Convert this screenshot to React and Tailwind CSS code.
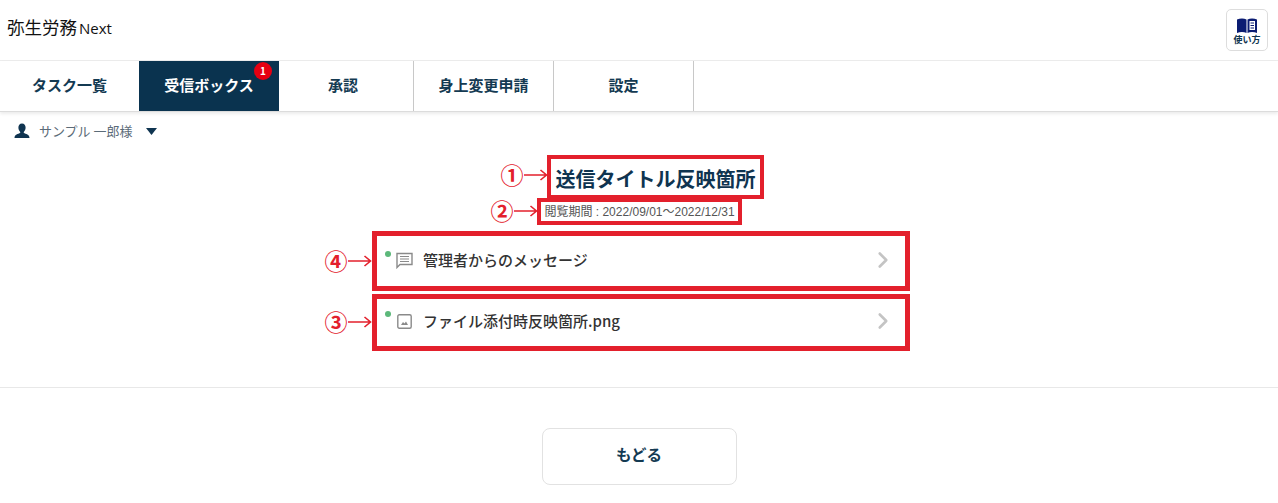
import { ChevronRight } from 'lucide-react';

const font = { jp: '"Noto Sans CJK JP", "Liberation Sans", sans-serif' };

const tabs = [
  { label: 'タスク一覧', width: 'w-[139px]' },
  { label: '受信ボックス', width: 'w-[140px]', active: true, badge: 1 },
  { label: '承認', width: 'w-[135px] pr-[6px]', divider: true },
  { label: '身上変更申請', width: 'w-[140px]', divider: true },
  { label: '設定', width: 'w-[140px]', divider: true },
];

function BookIcon() {
  return (
    <svg width="22" height="15" viewBox="0 0 22 15">
      <path d="M1 1.5 C4 0 8 0 10.5 1.5 V15 C8 13.5 4 13.5 1 15 Z" fill="#0b1c72" />
      <path d="M11.5 1.5 C14 0 18 0 21 1.5 V15 C18 13.5 14 13.5 11.5 15 Z" fill="#0b1c72" />
      <path d="M13.5 3 H19 V12 H13.5 Z" fill="#fff" />
      <path d="M14.5 5 H18 M14.5 7.5 H18 M14.5 10 H18" stroke="#0b1c72" strokeWidth="1" />
    </svg>
  );
}

function UserIcon() {
  return (
    <svg width="16" height="16" viewBox="0 0 16 16" fill="#0f3450">
      <path d="M8 0.5 C10.4 0.5 11.6 2.3 11.6 4.6 C11.6 6.6 10.8 8 9.8 9 V10 C11.8 10.8 15.5 11.5 15.5 15 H0.5 C0.5 11.5 4.2 10.8 6.2 10 V9 C5.2 8 4.4 6.6 4.4 4.6 C4.4 2.3 5.6 0.5 8 0.5 Z" />
    </svg>
  );
}

function MessageIcon() {
  return (
    <svg width="17" height="17" viewBox="0 0 17 17" fill="none" stroke="#8a8a8a">
      <path d="M1 1.5 H16 V12.5 H4 L1 15.5 Z" strokeWidth="1.4" />
      <path d="M4 4.5 H13 M4 7 H13 M4 9.5 H13" strokeWidth="1.2" />
    </svg>
  );
}

function ImageIcon() {
  return (
    <svg width="15" height="15" viewBox="0 0 15 15" fill="none">
      <rect x="0.8" y="0.8" width="13.4" height="13.4" rx="1.5" stroke="#8a8a8a" strokeWidth="1.4" />
      <path d="M4 11 L6 8 L7.5 9.5 L9 7.5 L11 11 Z" fill="#8a8a8a" />
    </svg>
  );
}

// 赤い注釈: 丸数字と矢印
function Callout({ mark, className }) {
  return (
    <div className={`absolute flex items-center text-[#e3202c] ${className}`}>
      <span className="w-[24px] text-center text-[23px] leading-none font-bold">{mark}</span>
      <svg width="24" height="12" viewBox="0 0 24 12" fill="none" stroke="#e3202c" strokeWidth="1.6">
        <path d="M0 6 H22 M16.5 1 L22.5 6 L16.5 11" />
      </svg>
    </div>
  );
}

function FileRow({ icon, label, mark, markTop, dotTop, className }) {
  return (
    <div className={`relative ml-[372px] flex w-[538px] items-center border-[5px] border-[#e3202c] bg-white ${className}`}>
      <Callout mark={mark} className={`left-[-53px] ${markTop}`} />
      <span className={`absolute left-[8px] h-[6px] w-[6px] rounded-full bg-[#5cb87a] ${dotTop}`} />
      <span className="ml-[18px] flex w-[19px] justify-center">{icon}</span>
      <span className="ml-[9px] flex-1 text-[15px] font-medium text-[#333]">{label}</span>
      <ChevronRight size={26} strokeWidth={2.4} className="mr-[9px] text-[#c4c4c4]" />
    </div>
  );
}

export default function App() {
  return (
    <div className="h-[503px] w-[1278px] overflow-hidden bg-white" style={{ fontFamily: font.jp }}>
      <header className="flex h-[61px] items-center justify-between border-b border-[#ececec] pl-[7px] pr-[10px]">
        <div className="flex items-baseline pb-[5px] text-[#111]">
          <span className="text-[17.5px]">弥生労務</span>
          <span className="ml-[2px] text-[15px]" style={{ fontFamily: '"Open Sans", sans-serif' }}>Next</span>
        </div>
        <button className="flex h-[42px] w-[42px] flex-col items-center justify-center rounded-[5px] border border-[#ddd] pt-[1px]">
          <BookIcon />
          <span className="mt-[2px] text-[9px] leading-none font-bold text-[#0f3450]">使い方</span>
        </button>
      </header>

      <nav className="flex h-[51px] border-b border-[#dcdcdc] shadow-[0_2px_3px_rgba(0,0,0,0.08)]">
        {tabs.map((tab) => (
          <div
            key={tab.label}
            className={`relative flex h-[50px] items-center justify-center pb-[2px] text-[15px] font-bold ${tab.width} ${
              tab.active ? 'bg-[#0a334f] text-white' : 'text-[#143a52]'
            } ${tab.divider ? 'border-r border-[#c8c8c8]' : ''}`}
          >
            {tab.label}
            {tab.badge && (
              <span className="absolute left-[115px] top-[1px] flex h-[18px] w-[18px] items-center justify-center rounded-full bg-[#e60012] text-[10px] leading-none font-bold text-white">
                {tab.badge}
              </span>
            )}
          </div>
        ))}
      </nav>

      <div className="flex h-[43px] items-center pb-[5px] pl-[14px]">
        <UserIcon />
        <span className="ml-[9px] text-[13px] text-[#5b6b78]">サンプル 一郎様</span>
        <svg width="11" height="7" viewBox="0 0 11 7" className="ml-[13px]" fill="#0f3450">
          <path d="M0 0 H11 L5.5 7 Z" />
        </svg>
      </div>

      <main className="flex flex-col items-start">
        <div className="relative ml-[547px] flex h-[44px] w-[217px] items-center justify-center border-[4px] border-[#e3202c] pt-[3px]">
          <Callout mark="①" className="left-[-51px] top-[4px]" />
          <h1 className="text-[20px] font-bold whitespace-nowrap text-[#0f3450]">送信タイトル反映箇所</h1>
        </div>
        <div className="relative ml-[537px] -mt-[1px] flex h-[27px] w-[205px] items-center justify-center border-[4px] border-[#e3202c] pt-[1px]">
          <Callout mark="②" className="left-[-51px] top-[-3px]" />
          <span className="text-[12px] whitespace-nowrap text-[#555]" style={{ fontFamily: '"Liberation Sans", "Noto Sans CJK JP", sans-serif' }}>
            閲覧期間 : 2022/09/01～2022/12/31
          </span>
        </div>
        <FileRow icon={<MessageIcon />} label="管理者からのメッセージ" mark="④" markTop="top-[13px]" dotTop="top-[15px]" className="mt-[6px] h-[60px] pb-[2px]" />
        <FileRow icon={<ImageIcon />} label="ファイル添付時反映箇所.png" mark="③" markTop="top-[11px]" dotTop="top-[12px]" className="mt-[3px] h-[57px] pb-[3px]" />
      </main>

      <div className="mt-[36px] border-t border-[#e8e8e8] pt-[40px]">
        <button className="mx-auto flex h-[57px] w-[195px] items-center justify-center rounded-[8px] border border-[#e2e2e2] pb-[3px] text-[15.5px] font-bold text-[#143a52]">
          もどる
        </button>
      </div>
    </div>
  );
}
